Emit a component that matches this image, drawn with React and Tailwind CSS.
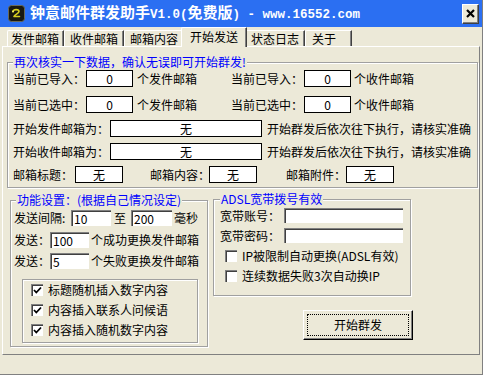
import React from 'react';

const font = "font-['Noto_Sans_CJK_SC','Noto_Sans',sans-serif]";

const Logo = () => (
  <svg width="17" height="17" viewBox="0 0 17 17">
    <rect x="0.5" y="0.5" width="16" height="16" rx="3" fill="#181810" stroke="#6a6a58" />
    <path d="M5 6.5 C5.5 4 11 4 11 6.5 C11 8.5 6.5 9.5 6 11.5 L11.5 11.5" fill="none" stroke="#d8d020" strokeWidth="1.6" strokeLinecap="round" strokeLinejoin="round" />
    <circle cx="5" cy="6.6" r="1" fill="#f4f060" />
  </svg>
);

const CloseBtn = () => (
  <div className="w-[17px] h-[20px] bg-[#ece9d8] border-t border-l border-white border-r border-b border-r-[#404040] border-b-[#404040] shadow-[inset_-1px_-1px_0_#808080] flex items-center justify-center">
    <svg width="9" height="9" viewBox="0 0 9 9">
      <path d="M1 1 L8 8 M8 1 L1 8" stroke="#000" strokeWidth="2.2" />
    </svg>
  </div>
);

const Tab = ({ label, w, pl = 'pl-[5px]', active }) =>
  active ? (
    <div className={`${w} h-[20px] -mx-[2px] -mb-[1px] relative z-10 bg-[#ece9d8] border-t border-l border-white border-r border-r-[#404040] shadow-[inset_-1px_0_0_#808080] rounded-tl-[2px] flex items-center justify-center pb-[2px]`}>
      {label}
    </div>
  ) : (
    <div className={`${w} ${pl} h-[16px] border-t border-l border-white border-r border-r-[#404040] shadow-[inset_-1px_0_0_#808080] rounded-tl-[2px] flex items-center`}>
      {label}
    </div>
  );

const Box = ({ w, children }) => (
  <div className={`${w} h-[17px] shrink-0 border border-black bg-white flex items-center justify-center`}>{children}</div>
);

const Sunk = ({ w, h = 'h-[16px]', children }) => (
  <div className={`${w} ${h} shrink-0 bg-white border-t border-l border-[#808080] shadow-[inset_1px_1px_0_#404040] flex items-center pl-[2px]`}>{children}</div>
);

const Check = ({ checked }) => (
  <div className="w-[12px] h-[12px] shrink-0 bg-white border-t border-l border-[#808080] shadow-[inset_1px_1px_0_#404040] flex items-center justify-center">
    {checked && (
      <svg width="9" height="9" viewBox="0 0 9 9">
        <path d="M1 4 L3.3 6.5 L8 1.5" fill="none" stroke="#000" strokeWidth="1.8" />
      </svg>
    )}
  </div>
);

const group = 'border border-[#a0a0a0] shadow-[inset_1px_1px_0_#fff,1px_1px_0_#fff]';
const legend = 'bg-[#ece9d8] text-[#0000ff] leading-[14px] px-[1px]';

export default function App() {
  return (
    <div className={`${font} text-[12px] leading-[14px] text-black whitespace-nowrap w-[483px] h-[375px] bg-[#ece9d8] overflow-hidden flex flex-col border-r border-b border-[#808080]`}>
      <div className="flex items-center h-[27px] shrink-0 bg-[#2b6ff2] pl-[8px] pr-[3px]">
        <Logo />
        <div className="ml-[5px] flex-1 text-white font-bold text-[15px] leading-[17px]">
          钟意邮件群发助手<span className="font-['Liberation_Mono',monospace] text-[12.5px]">V1.0(</span>免费版<span className="font-['Liberation_Mono',monospace] text-[12.5px]">) - www.16552.com</span>
        </div>
        <CloseBtn />
      </div>

      <div className="flex items-end h-[19px] shrink-0 pl-[7px]">
        <Tab label="发件邮箱" w="w-[57px]" pl="pl-[3px]" />
        <Tab label="收件邮箱" w="w-[60px]" />
        <Tab label="邮箱内容" w="w-[59px]" />
        <Tab label="开始发送" w="w-[66px]" active />
        <Tab label="状态日志" w="w-[60px]" />
        <Tab label="关于" w="w-[47px]" pl="pl-[6px]" />
      </div>

      <div className="ml-[2px] w-[478px] h-[309px] shrink-0 border-t border-l border-white border-r border-b border-r-[#808080] border-b-[#808080] pl-[4px]">
        <fieldset className={`${group} mt-[8px] w-[471px] pl-[5px] pt-[1px] pb-[4px]`}>
          <legend className={legend}>再次核实一下数据，确认无误即可开始群发!</legend>
          <div className="flex items-center h-[17px]">
            <div className="w-[218px] flex items-center">
              <div className="w-[73px]">当前已导入：</div>
              <Box w="w-[47px]">0</Box>
              <div className="ml-[4px]">个发件邮箱</div>
            </div>
            <div className="w-[73px]">当前已导入：</div>
            <Box w="w-[47px]">0</Box>
            <div className="ml-[3px]">个收件邮箱</div>
          </div>
          <div className="flex items-center h-[17px] mt-[9px]">
            <div className="w-[218px] flex items-center">
              <div className="w-[73px]">当前已选中：</div>
              <Box w="w-[47px]">0</Box>
              <div className="ml-[4px]">个发件邮箱</div>
            </div>
            <div className="w-[73px]">当前已选中：</div>
            <Box w="w-[47px]">0</Box>
            <div className="ml-[3px]">个收件邮箱</div>
          </div>
          <div className="flex items-center h-[17px] mt-[7px]">
            <div className="w-[97px]">开始发件邮箱为：</div>
            <Box w="w-[152px]">无</Box>
            <div className="ml-[5px]">开始群发后依次往下执行，请核实准确</div>
          </div>
          <div className="flex items-center h-[17px] mt-[6px]">
            <div className="w-[97px]">开始收件邮箱为：</div>
            <Box w="w-[152px]">无</Box>
            <div className="ml-[5px]">开始群发后依次往下执行，请核实准确</div>
          </div>
          <div className="flex items-center h-[17px] mt-[6px]">
            <div className="w-[62px]">邮箱标题：</div>
            <Box w="w-[48px]">无</Box>
            <div className="ml-[27px] w-[59px] shrink-0">邮箱内容：</div>
            <Box w="w-[48px]">无</Box>
            <div className="ml-[29px] w-[60px] shrink-0">邮箱附件：</div>
            <Box w="w-[48px]">无</Box>
          </div>
        </fieldset>

        <div className="flex items-start">
          <fieldset className={`${group} ml-[3px] mt-[5px] w-[198px] pl-[3px] pt-[3px] pb-[3px]`}>
            <legend className={`${legend} ml-[2px]`}>功能设置：(根据自己情况设定)</legend>
            <div className="flex items-center h-[16px]">
              <div className="w-[57px]">发送间隔:</div>
              <Sunk w="w-[40px]">10</Sunk>
              <div className="ml-[3px] w-[17px]">至</div>
              <Sunk w="w-[41px]">200</Sunk>
              <div className="ml-[2px]">毫秒</div>
            </div>
            <div className="flex items-center h-[16px] mt-[6px]">
              <div className="w-[36px]">发送：</div>
              <Sunk w="w-[39px]">100</Sunk>
              <div className="ml-[2px]">个成功更换发件邮箱</div>
            </div>
            <div className="flex items-center h-[16px] mt-[5px]">
              <div className="w-[36px]">发送：</div>
              <Sunk w="w-[39px]">5</Sunk>
              <div className="ml-[2px]">个失败更换发件邮箱</div>
            </div>
            <div className={`${group} ml-[8px] mt-[10px] w-[176px] h-[64px] pl-[8px] flex flex-col`}>
              {['标题随机插入数字内容', '内容插入联系人问候语', '内容插入随机数字内容'].map((t) => (
                <div key={t} className="flex items-center h-[20px]">
                  <Check checked />
                  <div className="ml-[5px]">{t}</div>
                </div>
              ))}
            </div>
          </fieldset>

          <div className="flex flex-col ml-[5px]">
            <fieldset className={`${group} mt-[4px] w-[198px] pl-[6px] pt-[2px] pb-[12px]`}>
              <legend className={legend}>ADSL宽带拨号有效</legend>
              <div className="flex items-center h-[15px]">
                <div className="w-[64px]">宽带账号：</div>
                <Sunk w="w-[119px]" h="h-[15px]" />
              </div>
              <div className="flex items-center h-[15px] mt-[5px]">
                <div className="w-[64px]">宽带密码：</div>
                <Sunk w="w-[119px]" h="h-[15px]" />
              </div>
              <div className="flex items-center h-[14px] mt-[6px] pl-[5px]">
                <Check />
                <div className="ml-[5px]">IP被限制自动更换(ADSL有效)</div>
              </div>
              <div className="flex items-center h-[14px] mt-[6px] pl-[5px]">
                <Check />
                <div className="ml-[5px]">连续数据失败3次自动换IP</div>
              </div>
            </fieldset>
            <button className="ml-[90px] mt-[14px] w-[110px] h-[30px] p-[3px] flex bg-[#ece9d8] border-t border-l border-white border-r border-b border-r-black border-b-black shadow-[inset_-1px_-1px_0_#808080]">
              <div className="flex-1 border border-dotted border-black flex items-center justify-center">开始群发</div>
            </button>
          </div>
        </div>
      </div>
      <div className="flex-1" />
    </div>
  );
}
